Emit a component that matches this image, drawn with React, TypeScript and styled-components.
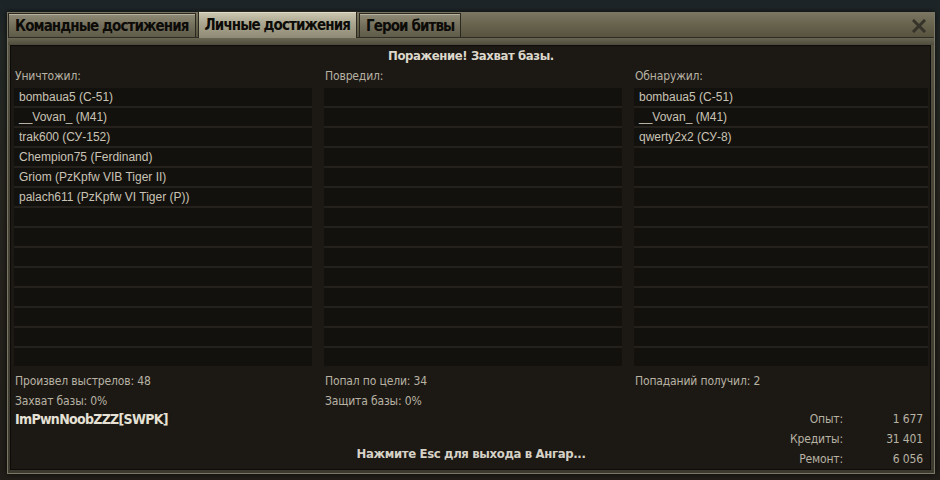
import React from 'react';
import styled, { createGlobalStyle } from 'styled-components';

const GlobalStyle = createGlobalStyle`
  html, body {
    margin: 0;
    padding: 0;
  }
  body {
    width: 940px;
    height: 480px;
    overflow: hidden;
    background: linear-gradient(
      180deg,
      #1d2428 0px,
      #222825 40px,
      #27251f 200px,
      #211e19 100%
    );
  }
`;

const narrow = `"DejaVu Sans Condensed", "Liberation Sans", sans-serif`;
const plain = `"Liberation Sans", Arial, sans-serif`;

const Window = styled.div`
  box-sizing: border-box;
  margin: 12px 0 0 7px;
  width: 928px;
  height: 462px;
  display: flex;
  flex-direction: column;
  background: linear-gradient(180deg, #5d5948 0%, #4a4739 30%, #3c392f 100%);
  border: 1px solid #7a7766;
  border-top: none;
  box-shadow: 0 0 6px rgba(0, 0, 0, 0.7);
`;

const TitleBar = styled.div`
  height: 25px;
  display: flex;
  align-items: flex-end;
  gap: 2px;
  padding: 0 8px 0 0;
  background: linear-gradient(180deg, #7b7764 0%, #69654f 45%, #57533f 100%);
  border-bottom: 1px solid #2e2c24;
`;

interface TabProps {
  active?: boolean;
}

const Tab = styled.div<TabProps>`
  box-sizing: border-box;
  height: ${({ active }) => (active ? '27px' : '24px')};
  margin-bottom: ${({ active }) => (active ? '-1px' : '0')};
  display: flex;
  align-items: center;
  padding: 0 6px;
  font-family: ${narrow};
  font-weight: 700;
  font-size: 15px;
  letter-spacing: -0.9px;
  color: #0c0b08;
  border: 1px solid #2a281f;
  border-bottom: none;
  background: ${({ active }) =>
    active
      ? 'linear-gradient(180deg, #cdc9b3 0%, #aca891 40%, #8e8a75 100%)'
      : 'linear-gradient(180deg, #8f8b76 0%, #736f5c 50%, #5f5b49 100%)'};
  box-shadow: inset 0 1px 0 rgba(255, 255, 240, 0.35);
`;

const Spacer = styled.div`
  flex: 1;
`;

const CloseButton = styled.div`
  align-self: center;
  width: 14px;
  height: 14px;
  margin-top: 2px;
  display: flex;
`;

const FrameStrip = styled.div`
  height: 8px;
  background: linear-gradient(180deg, #6a6653 0%, #4e4b3c 100%);
`;

const Panel = styled.div`
  box-sizing: border-box;
  margin: 0 3px 3px 2px;
  flex: 1;
  display: flex;
  flex-direction: column;
  padding: 0 2px 0 3px;
  background: #1c1915;
  border: 1px solid #0c0b09;
  font-family: ${narrow};
  font-size: 12px;
  letter-spacing: -0.15px;
  color: #b8b2a3;
`;

const Heading = styled.div`
  height: 20px;
  line-height: 20px;
  text-align: center;
  font-weight: 700;
  font-size: 13px;
  letter-spacing: -0.4px;
  color: #dcd7cb;
`;

const Columns = styled.div`
  display: grid;
  grid-template-columns: 298px 298px 1fr;
  column-gap: 12px;
`;

const Label = styled.div`
  height: 20px;
  line-height: 20px;
  padding-left: 1px;
  margin-bottom: 2px;
`;

const List = styled.div`
  display: flex;
  flex-direction: column;
  gap: 2px;
  background: #24211c;
`;

const Row = styled.div`
  height: 18px;
  line-height: 18px;
  padding-left: 5px;
  background: #13110e;
  font-family: ${plain};
  font-size: 12px;
  letter-spacing: 0;
  color: #c9c3b5;
  white-space: nowrap;
`;

const Stats = styled.div`
  display: grid;
  grid-template-columns: 298px 298px 1fr;
  column-gap: 12px;
  margin-top: 5px;
`;

const StatLine = styled.div`
  height: 20px;
  line-height: 20px;
  padding-left: 1px;
`;

const Footer = styled.div`
  flex: 1;
  display: grid;
  grid-template-columns: 1fr auto 1fr;
  margin-top: -2px;
`;

const PlayerName = styled.div`
  align-self: start;
  padding-left: 1px;
  line-height: 20px;
  font-weight: 700;
  font-size: 14px;
  letter-spacing: -0.7px;
  color: #e6e1d5;
`;

const ExitHint = styled.div`
  align-self: end;
  margin-bottom: 5px;
  line-height: 20px;
  font-weight: 700;
  font-size: 13px;
  letter-spacing: -0.35px;
  color: #d6d1c5;
`;

const Rewards = styled.div`
  justify-self: end;
  align-self: end;
  display: grid;
  grid-template-columns: auto 80px;
  padding-right: 5px;
`;

const RewardCell = styled.div`
  height: 20px;
  line-height: 20px;
  text-align: right;
`;

const killed = [
  'bombaua5 (С-51)',
  '__Vovan_ (M41)',
  'trak600 (СУ-152)',
  'Chempion75 (Ferdinand)',
  'Griom (PzKpfw VIB Tiger II)',
  'palach611 (PzKpfw VI Tiger (P))',
];

const damaged: string[] = [];

const spotted = ['bombaua5 (С-51)', '__Vovan_ (M41)', 'qwerty2x2 (СУ-8)'];

const ROWS = 14;

const PlayerList: React.FC<{ items: string[] }> = ({ items }) => (
  <List>
    {Array.from({ length: ROWS }).map((_, i) => (
      <Row key={i}>{items[i] ?? ''}</Row>
    ))}
  </List>
);

const rewards = [
  ['Опыт:', '1 677'],
  ['Кредиты:', '31 401'],
  ['Ремонт:', '6 056'],
];

const App: React.FC = () => {
  return (
    <>
      <GlobalStyle />
      <Window>
        <TitleBar>
          <Tab>Командные достижения</Tab>
          <Tab active>Личные достижения</Tab>
          <Tab>Герои битвы</Tab>
          <Spacer />
          <CloseButton>
            <svg width="14" height="14" viewBox="0 0 14 14">
              <path
                d="M2 2 L12 12 M12 2 L2 12"
                stroke="#35332a"
                strokeWidth="3"
                strokeLinecap="square"
              />
            </svg>
          </CloseButton>
        </TitleBar>
        <FrameStrip />
        <Panel>
          <Heading>Поражение! Захват базы.</Heading>
          <Columns>
            <div>
              <Label>Уничтожил:</Label>
              <PlayerList items={killed} />
            </div>
            <div>
              <Label>Повредил:</Label>
              <PlayerList items={damaged} />
            </div>
            <div>
              <Label>Обнаружил:</Label>
              <PlayerList items={spotted} />
            </div>
          </Columns>
          <Stats>
            <div>
              <StatLine>Произвел выстрелов: 48</StatLine>
              <StatLine>Захват базы: 0%</StatLine>
            </div>
            <div>
              <StatLine>Попал по цели: 34</StatLine>
              <StatLine>Защита базы: 0%</StatLine>
            </div>
            <div>
              <StatLine>Попаданий получил: 2</StatLine>
            </div>
          </Stats>
          <Footer>
            <PlayerName>ImPwnNoobZZZ[SWPK]</PlayerName>
            <ExitHint>Нажмите Esc для выхода в Ангар...</ExitHint>
            <Rewards>
              {rewards.map(([label, value]) => (
                <React.Fragment key={label}>
                  <RewardCell>{label}</RewardCell>
                  <RewardCell>{value}</RewardCell>
                </React.Fragment>
              ))}
            </Rewards>
          </Footer>
        </Panel>
      </Window>
    </>
  );
};

export default App;
